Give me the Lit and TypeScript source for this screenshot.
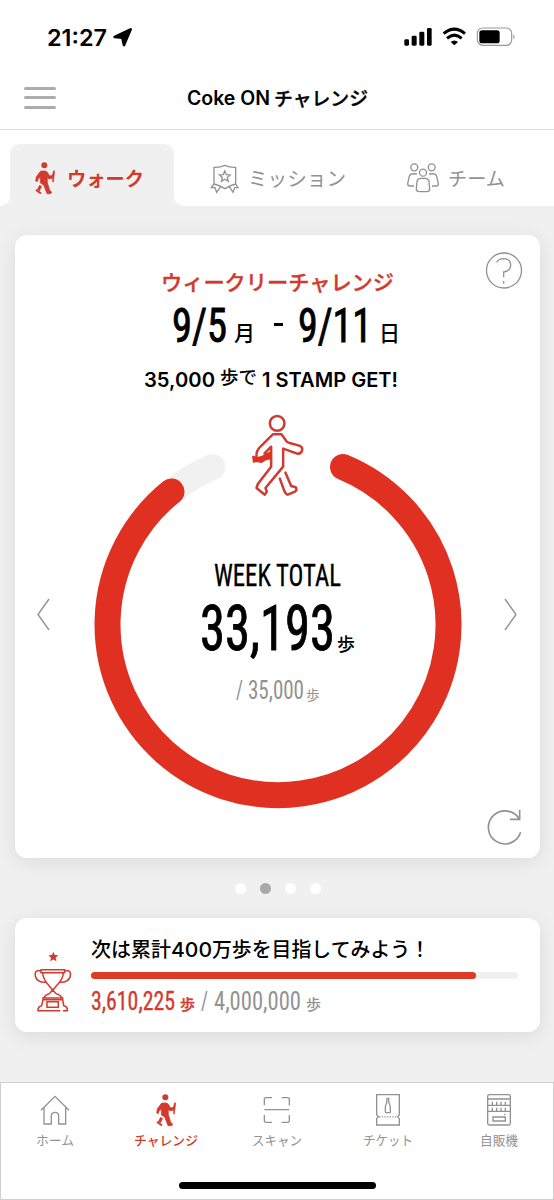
import { LitElement, html, svg, css } from "lit";
import { customElement } from "lit/decorators.js";

/** Text set to an exact width; the box height is the glyph height above the baseline (minus drop). */
const fit = (text: string, w: number, h: number, size: number, cls: string, drop = 0, dx = 0) => html`
  <svg class="fit ${cls}" width=${w} height=${h}>
    <text x=${dx} y=${h - drop} font-size=${size} textLength=${w} lengthAdjust="spacingAndGlyphs">${text}</text>
  </svg>`;

const icon = (w: number, h: number, box: string, cls: string, body: unknown) => html`
  <svg class="icon ${cls}" width=${w} height=${h} viewBox=${box}>${body}</svg>`;

const hiker = svg`
  <circle cx="131" cy="496" r="9" fill="currentColor" stroke="none"/>
  <path d="M120 513H134Q139 514 142 520L147 528L155 526L159 512L162 513L158 546L156 546L156 534L145 537L140 532V547L147 571L152 575Q154 580 149 581H139L137 576L129 555L119 549V531L112 537L110 545L105 543L107 530Z" fill="currentColor" stroke="currentColor" stroke-width="2"/>
  <path d="M120 557L113 571" stroke="currentColor" stroke-width="9" fill="none"/>
  <path d="M108 571L119 579" stroke="currentColor" stroke-width="6" fill="none" stroke-linecap="round"/>`;

const star = (cx: number, cy: number, r: number) => {
  const pts: string[] = [];
  for (let i = 0; i < 10; i++) {
    const a = (-90 + i * 36) * Math.PI / 180;
    const q = i % 2 ? r * 0.45 : r;
    pts.push(`${(cx + q * Math.cos(a)).toFixed(1)},${(cy + q * Math.sin(a)).toFixed(1)}`);
  }
  return pts.join(" ");
};

@customElement("app-root")
export class AppRoot extends LitElement {
  static styles = css`
    :host { display: flex; flex-direction: column; width: 554px; height: 1200px; overflow: hidden;
      background: #f0f0f0; color: #000; font-family: Inter, "Noto Sans CJK JP", sans-serif; }
    svg { display: block; flex: none; overflow: visible; }
    .icon { fill: none; stroke: currentColor; stroke-width: 4; }
    .fit { fill: currentColor; }
    .jp { font-family: "Noto Sans CJK JP", sans-serif; font-weight: 400; }
    .lat { font-family: Inter, sans-serif; font-weight: 600; }
    .num { font-family: Roboto, sans-serif; font-stretch: 75%; font-weight: 400; }
    .fit.m { font-weight: 500; }
    .fit.b { font-weight: 700; }
    .fit.s { stroke: currentColor; stroke-width: 0.35; }
    .fit.k { stroke: currentColor; stroke-width: 0.9; }
    .red { color: #d23a2e; }
    .grey { color: #929292; }
    .row { display: flex; }
    .end { align-items: flex-end; }
    .solid { fill: currentColor; stroke: none; }

    .status { height: 66px; box-sizing: border-box; background: #fff; display: flex; align-items: flex-start; padding: 27px 37px 0 47px; }
    .status .place { margin: 1px auto 0 6px; }
    .status .clock { margin-top: 2px; }
    .header { height: 64px; box-sizing: border-box; background: #fff; border-bottom: 1px solid #dadada; display: grid;
      grid-template-columns: 187px auto 1fr; align-items: start; }
    .menu { margin: 20.5px 0 0 24px; width: 32px; display: grid; gap: 6.8px; }
    .menu span { height: 3px; border-radius: 2px; background: #adadad; }
    .title { margin-top: 24px; gap: 4px; align-items: flex-end; }

    .tabs { padding-top: 14px; background: #fff; display: flex; height: 62px; }
    .gutter { width: 10px; background: #f0f0f0; }
    .gutter i { display: block; height: 100%; background: #fff; border-bottom-right-radius: 10px; }
    .active { width: 164px; box-sizing: border-box; background: #f0f0f0; border-radius: 10px 10px 0 0; display: flex; padding: 18px 0 0 25px; gap: 12px; }
    .others { flex: 1; background: #f0f0f0; }
    .others > div { box-sizing: border-box; height: 100%; background: #fff; border-bottom-left-radius: 10px; display: flex; padding: 18px 0 0 37px; }
    .tabtext { margin-top: 6.5px; }
    .badge { margin: 2.5px 10px 0 0; }
    .team { margin: 1px 9px 0 61px; }

    .card { position: relative; box-sizing: border-box; width: 525px; margin-left: 14.5px; background: #fff; border-radius: 12px;
      box-shadow: 0 4px 20px rgba(0, 0, 0, 0.09); }
    .walk { margin-top: 29px; height: 623px; padding-top: 37px; }
    .weekly { margin-left: 146px; }
    .dates { margin: 15px 0 0 157px; height: 36px; }
    .dates .a { margin-left: 7px; }
    .dates .dash { margin: 0 15px 16.5px 19px; width: 9px; height: 3px; background: #000; }
    .dates .c { margin-left: 7px; }
    .stamp { margin: 26.5px 0 0 129px; height: 18px; gap: 5px; align-items: flex-end; }
    .stamp .up { margin-bottom: 1.5px; }
    .help { position: absolute; top: 17px; right: 18px; }
    .reload { position: absolute; bottom: 13px; right: 18px; }

    .stage { margin-top: 23.5px; display: grid; grid-template-columns: 14px 368px 14px; column-gap: 42.5px; padding-left: 22.5px; align-items: center; }
    .stage .arrow { margin-top: 8px; }
    .dial { display: grid; }
    .dial > * { grid-area: 1 / 1; }
    .total { padding-top: 153px; display: flex; flex-direction: column; align-items: flex-start; }
    .total .t1 { margin-left: 120px; }
    .total .t2 { margin: 18.5px 0 0 106px; gap: 2.5px; }
    .total .t2 .u, .total .t3 .u { margin-bottom: -2px; }
    .total .t3 { margin: 30px 0 0 142px; gap: 2.5px; }
    .total .t3 .n { margin-left: 2.5px; }

    .dots { display: flex; justify-content: center; gap: 14px; margin-top: 25px; height: 11px; padding-left: 1px; }
    .dots i { width: 11px; height: 11px; border-radius: 50%; background: #fff; }
    .dots i.on { background: #a9a9a9; }

    .goal { margin-top: 24px; height: 114px; display: flex; padding: 22px 22px 0 19px; }
    .goal .cup { margin: 11px 19px 0 0; }
    .goal .body { flex: 1; }
    .bar { height: 7px; margin-top: 12.5px; border-radius: 4px; background: #f0f0f0; }
    .bar div { height: 7px; border-radius: 4px; background: #dc3b26; }
    .sum { margin-top: 12px; height: 19px; }
    .sum .u { margin: 0 6px -1px 5px; }
    .sum .n { margin-left: 6px; }

    .nav { margin-top: auto; box-sizing: border-box; height: 118.5px; background: #fff; border: 1px solid #cfcfcf;
      display: flex; flex-direction: column; align-items: center; }
    .items { align-self: stretch; display: grid; grid-template-columns: repeat(5, 111px); justify-content: center; padding-top: 11px; }
    .item { display: flex; flex-direction: column; align-items: center; gap: 7px; }
    .thumb { width: 197px; height: 7px; border-radius: 4px; background: #000; margin-top: 36px; }
  `;

  render() {
    const steps = 3610225, target = 4000000;
    return html`
      <div class="status">
        <div class="clock">${fit("21:27", 60, 17, 23, "lat")}</div>
        <div class="place">${icon(19, 19, "340 83 57 57", "", svg`<path d="M393 87L373 134L368 112L345 110Z" fill="#000" stroke="#000" stroke-linejoin="round" stroke-width="8"/>`)}</div>
        ${icon(113, 20, "384 81 339 60", "", svg`
          <g fill="#000" stroke="none">
            <rect x="385" y="118" width="14" height="19" rx="4"/><rect x="407" y="107" width="15" height="30" rx="4"/>
            <rect x="430" y="95" width="15" height="42" rx="4"/><rect x="453" y="84" width="14" height="53" rx="4"/>
            <path d="M535 136L524 126Q535 117 546 126Z"/><rect x="610" y="91" width="61" height="39" rx="8"/>
            <path d="M712 103Q720 110 712 118Z" fill="#999"/>
          </g>
          <path d="M503 101Q535 74 567 101M513 115Q535 96 557 115" stroke="#000" stroke-width="9"/>
          <rect x="604" y="84" width="103" height="52" rx="16" stroke="#999" stroke-width="3.5"/>`)}
      </div>
      <div class="header">
        <div class="menu"><span></span><span></span><span></span></div>
        <div class="row title">${fit("Coke ON", 83, 17, 19.5, "lat", 2)}${fit("チャレンジ", 94, 17, 19, "jp m s", 1)}</div>
      </div>
      <div class="tabs">
        <div class="gutter"><i></i></div>
        <div class="active red">
          ${icon(20, 32, "103 486 60 96", "", hiker)}
          <div class="tabtext">${fit("ウォーク", 77, 18, 19.5, "jp b", 1.5)}</div>
        </div>
        <div class="others"><div class="grey">
          <div class="badge">${icon(27, 28, "633 495 81 84", "", svg`
            <path d="M642 502Q660 503 675 496Q690 503 707 502V552Q692 556 675 566Q658 556 642 552ZM642 552L634 563L645 563L650 577L662 560M707 552L714 563L704 563L699 577L688 560"/>
            <polygon points=${star(674.5, 530, 17)}/>`)}</div>
          <div class="tabtext">${fit("ミッション", 98, 18, 19.6, "jp", 1.5)}</div>
          <div class="team">${icon(32, 30, "391 490 96 90", "", svg`
            <circle cx="413" cy="503" r="10.5"/><circle cx="465" cy="503" r="10.5"/><circle cx="439" cy="519" r="10.5"/>
            <path d="M421 545Q423 537 432 536H446Q455 537 457 545L459 568Q459 576 450 576H428Q419 576 419 568ZM421 523Q400 520 398 530L393 552Q393 559 400 559H412M457 523Q478 520 480 530L485 552Q485 559 478 559H466"/>`)}</div>
          <div class="tabtext">${fit("チーム", 57, 18, 19, "jp", 1.5)}</div>
        </div></div>
      </div>

      <div class="card walk">
        <div class="weekly red">${fit("ウィークリーチャレンジ", 233, 19, 21, "jp m s", 1.5)}</div>
        <div class="row end dates">
          ${fit("9/5", 55, 35, 49, "num k")}
          <div class="a">${fit("月", 21, 20, 22, "jp m", 1)}</div>
          <div class="dash"></div>
          ${fit("9/11", 74, 35, 49, "num k")}
          <div class="c">${fit("日", 21, 20, 22, "jp m", 1)}</div>
        </div>
        <div class="row stamp">
          ${fit("35,000", 71, 14, 19.8, "lat")}
          <div class="up">${fit("歩で", 37, 17, 18.5, "jp m", 1.5)}</div>
          ${fit("1 STAMP GET!", 136, 14, 19.8, "lat")}
        </div>
        <div class="stage">
          <div class="arrow grey">${icon(14, 32, "37 598 14 32", "", svg`<path d="M49 599L38 614.5L49 630" stroke-width="1.4"/>`)}</div>
          <div class="dial">
            ${icon(368, 400, "93.5 410 368 400", "", svg`
              <path d="M171 491.5A170.5 170.5 0 0 1 212 467" stroke="#f1f1f1" stroke-width="26" stroke-linecap="round"/>
              <path d="M342.5 467A170.5 170.5 0 1 1 171 491.5" stroke="#df3022" stroke-width="26" stroke-linecap="round"/>
              <g transform="translate(150 400) scale(.3333)" stroke="#cf3b31" stroke-width="7.5" stroke-linejoin="round" stroke-linecap="round">
                <circle cx="380" cy="70" r="22"/>
                <path d="M318 168Q317 152 330 140L367 103H393L408 124Q412 128 420 130L446 137Q457 141 455 151Q452 162 440 161L398 146V200L345 264L349 275L343 284L318 264L322 252L362 200V140L342 160"/>
                <path d="M405 218L422 258L436 262Q440 268 435 274L412 284Q406 284 402 274L388 236"/>
                <path d="M307 169L320 173Q338 170 348 161L360 157V176Q345 177 333 187L318 184L309 186Z" fill="#df3022" stroke="#df3022" stroke-width="4"/>
              </g>`)}
            <div class="total">
              <div class="t1">${fit("WEEK TOTAL", 127, 23, 32, "num s")}</div>
              <div class="row end t2">${fit("33,193", 135, 45, 63, "num k")}<div class="u">${fit("歩", 18, 17, 18.5, "jp m", 1)}</div></div>
              <div class="row end t3 grey">${fit("/", 7, 19, 26, "num")}<div class="n">${fit("35,000", 56, 19, 26, "num")}</div><div class="u">${fit("歩", 13.5, 13, 14, "jp", 1)}</div></div>
            </div>
          </div>
          <div class="arrow grey">${icon(14, 32, "504 598 14 32", "", svg`<path d="M505 599L516 614.5L505 630" stroke-width="1.4"/>`)}</div>
        </div>
        <div class="help grey">${icon(36, 37, "258 79 108 111", "", svg`<circle cx="312" cy="134.5" r="52.5"/><path d="M290 110Q296 99 312 99Q332 100 332 118Q332 136 311 139V155M311 166V174"/>`)}</div>
        <div class="reload grey">${icon(35, 36, "259 85 105 108", "", svg`<path d="M360 155A49.5 49.5 0 1 1 356 116M328 116H357V87" stroke-width="5"/>`)}</div>
      </div>
      <div class="dots"><i></i><i class="on"></i><i></i><i></i></div>

      <div class="card goal">
        <div class="cup red">${icon(38, 62, "102 125 114 186", "", svg`
          <polygon class="solid" points=${star(160, 143, 16)}/>
          <path d="M123 181H194V190H123ZM128 190C128 215 150 230 156 240H161C166 230 190 215 190 190M123 184H112Q104 186 106 200Q110 220 138 219M194 184H205Q213 186 211 200Q207 220 179 219M132 265Q136 256 148 253L158 242L168 253Q182 256 185 265M129 271V266H188V271ZM129 271L125 289Q113 292 114 304H181M188 271L191 289Q204 292 202 304H189M141 277H175V294H141Z" stroke-width="4.6"/>`)}</div>
        <div class="body">
          <div class="row">
            ${fit("次は累計", 80, 19, 20, "jp m", 2)}${fit("400", 41, 19, 20, "lat m", 2)}${fit("万歩を目指してみよう！", 218, 19, 20, "jp m", 2)}
          </div>
          <div class="bar"><div style="width:${(steps / target * 100).toFixed(2)}%"></div></div>
          <div class="row end sum">
            <div class="red">${fit(steps.toLocaleString("en-US"), 84, 19, 26, "num s")}</div>
            <div class="u red">${fit("歩", 15, 14, 15, "jp m s", 1)}</div>
            <div class="row end grey">${fit("/", 7, 19, 26, "num")}<div class="n">${fit(target.toLocaleString("en-US"), 87, 19, 26, "num")}</div><div class="u">${fit("歩", 15, 14, 15, "jp m", 1)}</div></div>
          </div>
        </div>
      </div>

      <div class="nav">
        <div class="items grey">
          <div class="item">${icon(30, 32, "123 56 90 96", "", svg`<path d="M126 105L168 63L210 105M135 97V146H157V120Q158 111 168 111Q178 111 179 120V146H200V97"/>`)}${fit("ホーム", 38, 13, 13, "jp", 1)}</div>
          <div class="item red">${icon(20, 32, "103 486 60 96", "", hiker)}${fit("チャレンジ", 64, 13, 13, "jp m", 1)}</div>
          <div class="item">${icon(26, 32, "794 56 78 96", "", svg`<path d="M795 90V72Q795 67 801 67H818M847 67H865Q870 67 870 73V90M795 119V137Q795 141 801 141H818M847 141H865Q870 141 870 136V119M795 103H870"/>`)}${fit("スキャン", 50, 13, 13, "jp", 1)}</div>
          <div class="item">${icon(24, 32, "298 56 72 96", "", svg`<path d="M300 58H368V118L363 124L368 130V149H300V130L305 124L300 118ZM331 69H336L337 83Q341 89 341 97V109Q341 112 338 112H329Q326 112 326 109V97Q326 89 330 83Z"/><path d="M307 124.5H362" stroke-dasharray="4 4"/>`)}${fit("チケット", 50, 13, 13, "jp", 1)}</div>
          <div class="item">${icon(24, 32, "630 56 72 96", "", svg`<rect x="632" y="58" width="68" height="91" rx="5"/><path d="M632 71H700M632 90H700M632 108H700M646 79V90M659 79V90M672 79V90M685 79V90M646 97V108M659 97V108M672 97V108M685 97V108M648 125H685V137H648ZM681 117H685"/>`)}${fit("自販機", 38, 13, 12.7, "jp", 1)}</div>
        </div>
        <div class="thumb"></div>
      </div>
    `;
  }
}
